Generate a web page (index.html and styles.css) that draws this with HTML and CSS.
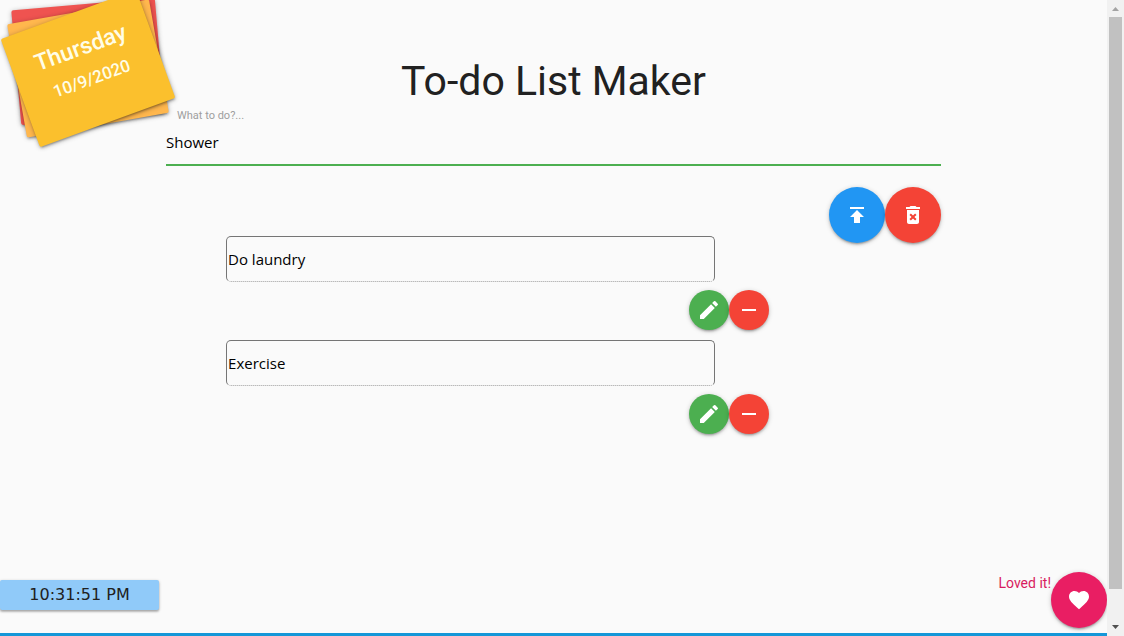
FILE: index.html
```
<!DOCTYPE html>
<html lang="en">
<head>
<meta charset="utf-8">
<meta name="viewport" content="width=device-width, initial-scale=1">
<title>To-do List Maker</title>
<link rel="stylesheet" href="styles.css">
</head>
<body>
<div class="page">
  <aside class="calendar">
    <div class="sheet sheet-red"></div>
    <div class="sheet sheet-orange"></div>
    <div class="sheet sheet-yellow">
      <p class="day">Thursday</p>
      <p class="date">10/9/2020</p>
    </div>
  </aside>

  <main class="content">
    <h1 class="title">To-do List Maker</h1>
    <form class="entry">
      <label class="entry-label" for="task">What to do?...</label>
      <input class="entry-input" id="task" type="text" value="Shower">
      <div class="actions">
        <button class="round large blue" type="button" aria-label="Add task">
          <svg class="icon" viewBox="0 0 24 24"><path d="M5 4v2h14V4H5zm0 10h4v6h6v-6h4l-7-7-7 7z"/></svg>
        </button>
        <button class="round large red" type="button" aria-label="Delete all">
          <svg class="icon" viewBox="0 0 24 24"><path d="M6 19c0 1.1.9 2 2 2h8c1.1 0 2-.9 2-2V7H6v12zm2.46-7.12l1.41-1.41L12 12.59l2.12-2.12 1.41 1.41L13.41 14l2.12 2.12-1.41 1.41L12 15.41l-2.12 2.12-1.41-1.41L10.59 14l-2.13-2.12zM15.5 4l-1-1h-5l-1 1H5v2h14V4z"/></svg>
        </button>
      </div>
    </form>

    <ul class="tasks">
      <li class="task">
        <input class="task-text" type="text" aria-label="Task 1" value="Do laundry">
        <div class="actions">
          <button class="round green" type="button" aria-label="Edit task 1">
            <svg class="icon" viewBox="0 0 24 24"><path d="M3 17.25V21h3.75L17.81 9.94l-3.75-3.75L3 17.25zM20.71 7.04a1 1 0 0 0 0-1.41l-2.34-2.34a1 1 0 0 0-1.41 0l-1.83 1.83 3.75 3.75 1.83-1.83z"/></svg>
          </button>
          <button class="round red" type="button" aria-label="Remove task 1">
            <svg class="icon" viewBox="0 0 24 24"><path d="M5 11h14v2H5z"/></svg>
          </button>
        </div>
      </li>
      <li class="task">
        <input class="task-text" type="text" aria-label="Task 2" value="Exercise">
        <div class="actions">
          <button class="round green" type="button" aria-label="Edit task 2">
            <svg class="icon" viewBox="0 0 24 24"><path d="M3 17.25V21h3.75L17.81 9.94l-3.75-3.75L3 17.25zM20.71 7.04a1 1 0 0 0 0-1.41l-2.34-2.34a1 1 0 0 0-1.41 0l-1.83 1.83 3.75 3.75 1.83-1.83z"/></svg>
          </button>
          <button class="round red" type="button" aria-label="Remove task 2">
            <svg class="icon" viewBox="0 0 24 24"><path d="M5 11h14v2H5z"/></svg>
          </button>
        </div>
      </li>
    </ul>
  </main>

  <footer class="footer">
    <time class="clock">10:31:51 PM</time>
    <div class="love">
      <span class="love-text">Loved it!</span>
      <button class="round large pink" type="button" aria-label="Love this app">
        <svg class="icon" viewBox="0 0 24 24"><path d="M12 21.35l-1.45-1.32C5.4 15.36 2 12.28 2 8.5 2 5.42 4.42 3 7.5 3c1.74 0 3.41.81 4.5 2.09C13.09 3.81 14.76 3 16.5 3 19.58 3 22 5.42 22 8.5c0 3.78-3.4 6.86-8.55 11.54L12 21.35z"/></svg>
      </button>
    </div>
  </footer>
</div>

<div class="scrollbar" aria-hidden="true">
  <svg class="arrow" viewBox="0 0 17 17"><path fill="#a3a3a3" d="M5 11h7L8.5 7z"/></svg>
  <div class="track"><div class="thumb"></div></div>
  <svg class="arrow" viewBox="0 0 17 17"><path fill="#505050" d="M5 6h7L8.5 10z"/></svg>
</div>
</body>
</html>
```
FILE: styles.css
```
* {
  box-sizing: border-box;
}

body {
  margin: 0;
  height: 100vh;
  display: flex;
  overflow: hidden;
  background: #fafafa;
  color: #212121;
  font-family: "Open Sans", "Noto Sans", sans-serif;
}

.page {
  position: relative;
  flex: 1;
  display: flex;
  flex-direction: column;
  overflow: hidden;
  border-bottom: 3px solid #1497d8;
}

/* Stacked calendar sheets in the corner */
.calendar {
  position: absolute;
  top: 11px;
  left: 16px;
  width: 144px;
  height: 115px;
}

.sheet {
  position: absolute;
  inset: 0;
  border-radius: 2px;
  box-shadow: 0 2px 2px rgba(0, 0, 0, 0.14), 0 3px 1px -2px rgba(0, 0, 0, 0.12), 0 1px 5px rgba(0, 0, 0, 0.3);
}

.sheet-red {
  inset: -7px 0 7px 0;
  background: #ef5350;
  transform: rotate(-5deg);
}

.sheet-orange {
  background: #ffb74d;
  transform: rotate(-10deg);
}

.sheet-yellow {
  padding-top: 20px;
  background: #fbc02d;
  color: #fffde7;
  font-family: Roboto, sans-serif;
  font-weight: 500;
  text-align: center;
  transform: rotate(-20deg);
}

.day,
.date {
  margin: 0;
  line-height: 32px;
  font-size: 23px;
}

.date {
  font-size: 17px;
}

.content {
  flex: 1;
  width: 70%;
  margin: 0 auto;
}

.title {
  margin: 0;
  padding-top: 53px;
  font-family: Roboto, sans-serif;
  font-size: 41px;
  font-weight: 400;
  line-height: 56px;
  text-align: center;
}

.entry {
  display: flex;
  flex-direction: column;
}

.entry-label {
  padding-left: 11px;
  color: #9e9e9e;
  font-family: Roboto, sans-serif;
  font-size: 11px;
  line-height: 13px;
}

.entry-input,
.task-text {
  width: 100%;
  height: 44px;
  padding: 0;
  border: 0;
  outline: 0;
  background: transparent;
  color: #000;
  font-family: "Open Sans", "Noto Sans", sans-serif;
  font-size: 15px;
}

.entry-input {
  padding-bottom: 2px;
  border-bottom: 2px solid #4caf50;
}

.actions {
  display: flex;
  justify-content: flex-end;
}

.entry .actions {
  padding-top: 21px;
}

.round {
  display: flex;
  align-items: center;
  justify-content: center;
  width: 40px;
  height: 40px;
  padding: 0;
  border: 0;
  border-radius: 50%;
  box-shadow: 0 2px 2px rgba(0, 0, 0, 0.14), 0 3px 1px -2px rgba(0, 0, 0, 0.12), 0 1px 5px rgba(0, 0, 0, 0.2);
  color: #fff;
}

.large {
  width: 56px;
  height: 56px;
}

.icon {
  width: 24px;
  height: 24px;
  fill: currentColor;
}

.blue { background: #2196f3; }
.red { background: #f44336; }
.green { background: #4caf50; }
.pink { background: #e91e63; }

.tasks {
  display: grid;
  gap: 10px;
  margin: -7px 172px 0 60px;
  padding: 0;
  list-style: none;
}

.task {
  display: grid;
  gap: 8px;
}

.task-text {
  width: 90%;
  min-width: 0;
  height: 46px;
  padding: 0 1px;
  border: 1px solid #757575;
  border-bottom: 1px dotted #9e9e9e;
  border-radius: 5px;
}

.footer {
  display: flex;
  align-items: flex-end;
  justify-content: space-between;
  padding-bottom: 5px;
}

.clock {
  width: 159px;
  margin-bottom: 18px;
  border-radius: 2px;
  background: #90caf9;
  box-shadow: 0 2px 2px rgba(0, 0, 0, 0.14), 0 1px 3px rgba(0, 0, 0, 0.3);
  font-family: "DejaVu Sans", sans-serif;
  font-size: 16px;
  line-height: 30px;
  text-align: center;
}

.love {
  display: flex;
}

.love-text {
  color: #d81b60;
  font-family: Roboto, sans-serif;
  font-size: 14px;
  line-height: 22px;
}

.scrollbar {
  display: flex;
  flex-direction: column;
  width: 17px;
  background: #f1f1f1;
}

.arrow {
  width: 17px;
  height: 17px;
}

.track {
  flex: 1;
  padding: 0 2px;
}

.thumb {
  height: 95%;
  background: #c1c1c1;
}
```
